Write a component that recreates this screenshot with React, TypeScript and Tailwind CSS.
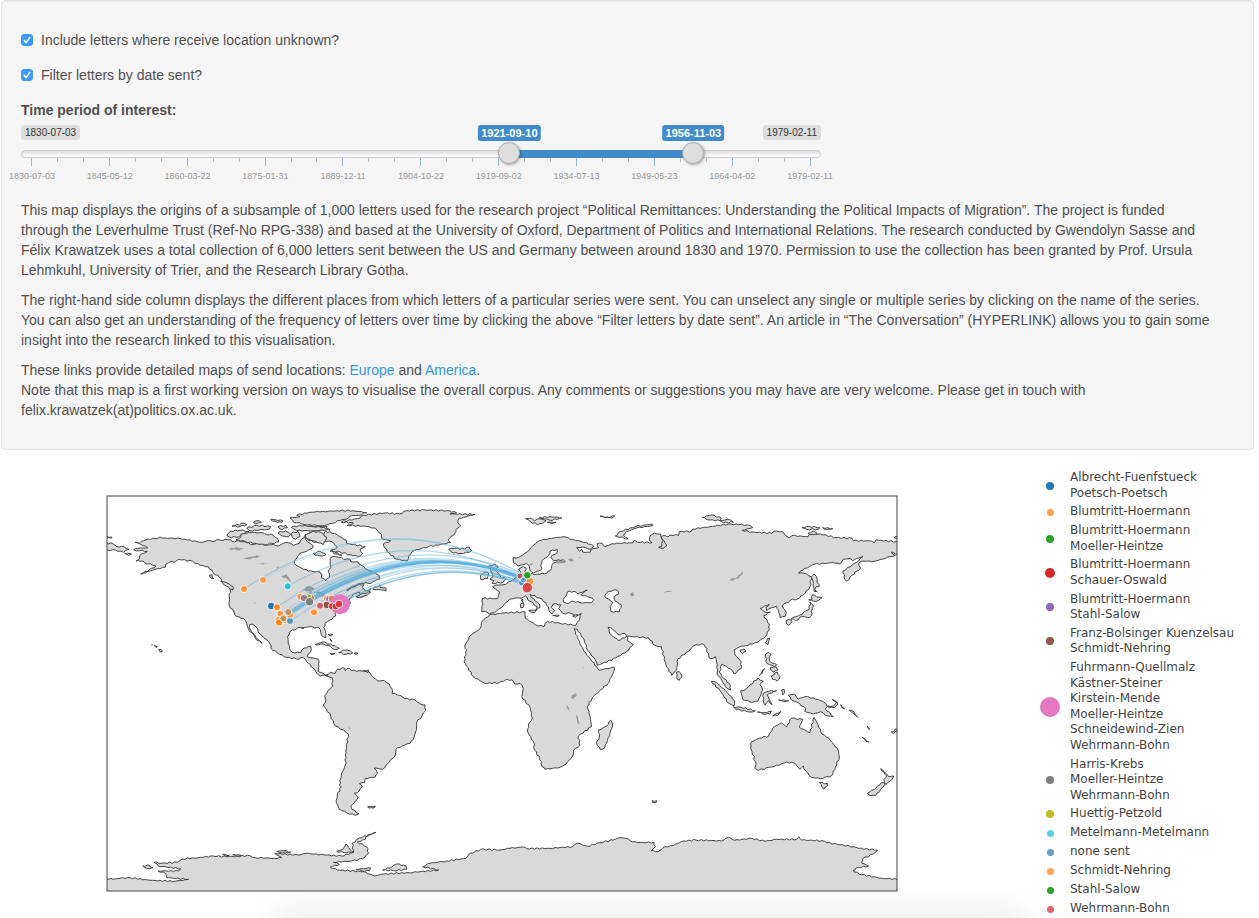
import { useState } from "react";

/* ---------- dates ---------- */

const DAY = 86400000;
const START = Date.UTC(1830, 6, 3);
const SPAN = Math.round((Date.UTC(1979, 1, 11) - START) / DAY);
const toDays = (y: number, m: number, d: number) =>
  Math.round((Date.UTC(y, m - 1, d) - START) / DAY);
const toLabel = (days: number) =>
  new Date(START + days * DAY).toISOString().slice(0, 10);

const TICK_LABELS = [
  "1830-07-03",
  "1845-05-12",
  "1860-03-22",
  "1875-01-31",
  "1889-12-11",
  "1904-10-22",
  "1919-09-02",
  "1934-07-13",
  "1949-05-23",
  "1964-04-02",
  "1979-02-11",
];

/* ---------- map geometry ---------- */

// Outlines are digitised sheet by sheet, three units to one map unit.
const SHEETS: Record<string, [number, number]> = {
  a: [100, 490],
  b: [300, 490],
  c: [450, 490],
  d: [670, 490],
  e: [300, 640],
  f: [450, 600],
  g: [670, 640],
  h: [100, 790],
  i: [500, 780],
};

// Long coast segments are subdivided and roughened by up to this many map units.
const ROUGHNESS = 0.7;

function outline(source: string): string {
  let sheet = SHEETS.a;
  const corners: [number, number][] = [];
  for (const token of source.trim().split(/\s+/)) {
    if (SHEETS[token]) {
      sheet = SHEETS[token];
    } else {
      const [x, y] = token.split(",").map(Number);
      corners.push([sheet[0] + x / 3, sheet[1] + y / 3]);
    }
  }
  const points: string[] = [];
  corners.forEach(([x1, y1], k) => {
    const [x2, y2] = corners[(k + 1) % corners.length];
    const length = Math.hypot(x2 - x1, y2 - y1);
    const pieces = Math.max(1, Math.round(length / 2.6));
    for (let n = 0; n < pieces; n++) {
      const t = n / pieces;
      const offset =
        n === 0 ? 0 : Math.sin(k * 12.9 + n * 78.2 + x1) * ROUGHNESS;
      const x = x1 + (x2 - x1) * t - ((y2 - y1) / length) * offset;
      const y = y1 + (y2 - y1) * t + ((x2 - x1) / length) * offset;
      points.push(`${x.toFixed(1)},${y.toFixed(1)}`);
    }
  });
  return points.join(" ");
}

const LAND = [
  // North America
  `a 105,157 118,160 124,154 145,147 165,146 180,141 196,144 240,146 262,150 305,157 320,153 345,153 352,148 362,151 375,148 392,150 396,154 418,153 440,158 452,164 470,160 500,165 520,163 535,168 550,160 565,158 580,166 598,160 604,148 614,142 622,155 638,166 640,172 620,184 600,190 590,204 583,214 588,226 604,234 625,243 660,246
   b 60,249 66,253 64,263 78,272 88,262 84,243 92,232 90,205 98,199 125,202 132,209 150,207 152,215 174,216 184,226 205,240 222,247 236,256 240,266 226,272 215,279 181,280 165,288 150,294 140,301 158,292 178,283 192,284 186,293 196,303 213,295 210,308 186,321 170,320 180,310 177,306 160,312 150,325 146,333 152,339 132,345 118,352 108,362 107,378 90,390 75,400 71,412 78,430 77,443 70,441 62,427 56,412 44,414 36,410 20,412 5,416
   a 612,414 600,412 570,425 563,440 565,462 572,482 584,489 602,488 612,474 632,470 634,478 622,500 656,508 657,530 655,545
   b 65,548 76,556 92,548 94,556 84,560 75,556 62,558 48,546 40,534
   a 625,520 610,503 590,507 560,502 532,489 513,475 510,462 498,448 480,432 468,411 456,402 449,404 452,420 464,434 472,447 486,460 470,450 462,436 448,424 440,400 430,385 410,380 402,366 388,347 388,320 391,300 386,290 370,279 358,262 340,248 325,230 300,226 278,214 236,208 226,216 214,214 198,222 196,232 165,238 122,252 148,240 168,228 150,221 138,222 128,213 108,213 118,207 120,196 142,184 118,182 101,180 106,175 143,173 122,163`,
  // South America
  `e 76,106 92,96 106,100 112,88 134,84 136,92 148,84 154,92 178,92 205,93 214,106 232,122 254,122 268,132 278,152 276,160 300,166 314,176 345,180 358,190 375,195 377,212 366,228 350,247 350,268 342,292 330,310 305,318 288,328 286,346 268,366 248,388 222,384 233,400 226,411 196,415 194,428 178,431 187,440 172,458 162,460 174,472 162,490 152,498 156,508 177,521 165,526 140,518 118,508 109,488 112,465 124,440 118,436 124,405 136,375 138,330 145,282 136,274 106,258 92,228 70,195 78,180 74,168 84,152 98,138 96,112`,
  // Eurasia and Africa
  `c 190,203 206,202 232,186 250,166 268,152 296,146 322,142 348,141 360,148 385,152 424,163 431,169 420,178 398,171 380,172 388,184 396,178 398,186 420,187 424,178 446,173 442,161 456,160 465,170 486,161 538,158 548,159 553,151 562,156 606,158 598,148 600,138 614,129 632,132 637,148 651,166 640,175 626,172 636,168 638,152 634,140 646,137 654,141 660,135
   d 26,136 28,125 64,124 68,117 120,110 175,102 206,104 240,106 248,113 216,121 246,126 305,130 312,124 338,125 348,138 358,143 366,137 414,140 418,133 452,132 498,143 546,145 550,152 604,153 613,158 618,150 678,155 690,158 690,198 664,186 676,196 660,200 640,207 612,214 575,213 566,220 572,234 562,243 546,256 530,274 522,262 520,242 546,226 566,212 579,200 560,205 548,212 540,205 520,208 510,222 490,218 432,223 398,240 386,250 402,250 424,260 420,290 405,310 382,327 362,330 350,338 336,348 349,368 346,379 330,383 326,368 320,348 304,353 290,362 288,352 298,343 270,355 284,366 301,366 281,377 298,402 298,420 285,440 262,457 226,467 214,468 192,480 194,492 214,516 213,536 192,552 182,537 156,522 148,546 162,566
   g 178,130 182,150 166,140 152,115
   d 142,555 142,525 136,500 120,506 106,470 95,461 70,468 60,480 24,506 20,538 6,556
   c 665,556 648,525 634,470 615,466 595,443 530,439 526,431 504,434 488,417 474,412 480,432 504,451 524,444 530,438 532,452 550,463 530,484 498,504 442,526 436,510 412,480 403,450 382,418 372,416 384,448 402,484 440,530 446,540 493,532
   f 490,218 474,250 430,290 411,320 421,350 424,380 385,408 390,436 371,450 368,468 348,492 330,502 285,508 276,500 274,484 254,450 250,425 233,396 235,375 247,354 240,322 215,290 220,265 210,250 194,252 186,239 166,240 148,248 104,250 70,230 42,185 50,150 44,138 62,106 90,86 96,64 118,45 160,39 225,36 226,55 256,74 282,80 292,64 330,70 378,76 390,52
   c 394,370 378,378 362,370 338,370 326,356 332,344 310,342 304,352 314,362 306,372 296,358 288,338 268,324 240,312 244,322 268,342 270,352 258,362 262,350 240,334 226,318 214,325 196,324 178,328 158,348 134,368 118,372 110,366 95,366 98,325 142,326 149,306 128,290 138,285 162,284 182,274 196,264 205,262 212,252 206,238 220,230 230,236 224,244 238,252 262,252 290,250 304,236 306,224 318,217 346,215 340,209 310,212 302,202 322,186 322,178 300,184 296,196 276,212 272,226 276,236 262,244 250,250 240,242 238,228 230,220 204,228 192,220`,
  // Antarctica
  `h 10,265 40,268 60,265 90,263 150,271 225,274 266,268 200,263 196,250 174,243 236,243 242,236 175,228 163,217 185,220 232,217 246,207 310,202 340,198 380,200 450,197 466,203 524,205 545,203 524,190 548,193 600,195 618,190 672,195 724,198 760,188 757,160 778,144 828,127 798,140 796,148 772,156 800,170 806,190 788,206 755,213 700,217 718,223 691,231 712,240 790,245 824,258 850,252 928,248 1016,240 968,230 990,220 1040,213 1098,205 1106,193 1142,178 1200,180
   i 30,205 68,201 80,206 150,205 218,200 232,190 262,199 300,188 340,180 358,173 378,175 392,183 412,188 462,187 466,200 454,212 474,215 494,200 520,197 545,184 588,180 665,183 685,172 704,181 755,175 795,184 830,178 890,178 897,170 905,180 965,182 980,188 1060,200 1076,205 1132,210 1120,222 1088,236 1084,248 1106,258 1068,264 1059,272 1085,284 1145,295 1200,298 1200,348
   h 10,318`,
  // Greenland and Iceland
  `b 124,96 180,84 190,76 255,69 298,72 320,62 376,60 440,62 470,68 450,72 525,73 490,82 478,84 474,98 482,108 468,118 464,130 444,150 452,158 385,170 342,182 326,197 322,213 290,208 262,186 250,162 272,152 248,148 244,132 224,114 190,108 142,106 160,99`,
  `b 446,178 462,175 480,178 508,172 515,182 490,191 460,189`,
  // Canadian Arctic
  `a 570,84 600,80 590,76 614,69 645,66 b 60,66 110,62 160,62 200,68 176,76 150,78 138,88 112,92 98,100 66,108 30,104 a 616,104 598,98 582,98`,
  `b 0,112 36,108 82,110 76,118 40,122 6,120`,
  `b 12,140 28,128 70,134 76,124 104,130 118,140 138,150 140,160 196,170 180,178 188,190 176,200 150,194 120,186 90,184 112,172 96,156 72,152 40,156 22,148`,
  `a 380,136 392,123 420,121 446,124 430,134 408,142 388,141`,
  `a 408,150 422,142 424,132 454,128 488,128 500,134 514,132 530,144 536,156 516,160 494,164 458,160 436,154`,
  `a 396,108 432,100 440,104 420,110`,
  `a 460,97 478,92 484,98 468,102`,
  `a 440,115 470,106 512,110 508,118 478,120 450,122`,
  `a 512,88 548,92 546,97 518,94`,
  `a 534,110 558,106 562,114 540,117`,
  `a 534,128 556,123 572,132 566,140 546,138`,
  `a 574,112 598,106 640,110 672,112 690,120 640,122 590,122`,
  `a 616,134 640,124 664,128 680,142 670,164 640,152 620,146`,
  `a 574,130 594,124 600,140 588,148 576,140`,
  `b 40,190 60,184 78,194 68,198 46,196`,
  `b 95,180 112,188 126,196 104,192`,
  // Atlantic coast islands
  `b 218,297 240,284 240,292 258,294 258,303 244,300`,
  `b 168,320 190,310 211,306 202,315 178,323`,
  // Pacific coast islands and Aleutians
  `a 362,274 380,278 400,292 398,300 378,288`,
  `a 328,256 336,254 341,266 332,264`,
  `a 10,158 40,162 50,170 72,170 87,178 70,187 46,180 10,182`,
  `a 10,139 36,141 34,145 10,144`,
  `a 74,190 94,192 86,196`,
  `a 176,478 187,482 182,487`,
  `a 163,467 172,470 168,472`,
  // Caribbean
  `b 46,464 66,456 92,462 118,475 104,479 84,466 62,462`,
  `b 116,488 128,480 142,480 158,489 138,493`,
  `b 90,490 104,491 96,494`,
  `b 162,490 174,490 168,493`,
  `b 84,434 98,434 94,438`,
  `b 90,446 96,454 92,452`,
  `b 190,542 206,540 204,548`,
  // Falklands and Kerguelen
  `e 203,500 226,498 222,504 206,504`,
  `i 456,62 470,62 468,68 458,68`,
  // British Isles
  `c 116,228 134,222 145,231 136,238 150,258 168,268 160,277 126,280 132,272 120,268 130,260 122,240`,
  `c 92,268 92,256 104,246 117,252 112,266`,
  // Mediterranean islands
  `c 236,362 258,360 254,368`,
  `c 211,342 220,338 220,352 212,354`,
  `c 214,330 219,328 218,337`,
  `c 308,376 328,377 320,380`,
  `c 368,378 384,374 376,382`,
  // Arctic Ocean islands
  `c 226,86 244,84 254,92 270,86 288,92 278,100 262,104 240,94`,
  `c 268,83 300,80 336,83 322,88 298,90`,
  `c 292,97 318,97 304,101`,
  `c 450,79 472,82 494,78 486,84`,
  `c 496,138 512,124 556,110 606,102 608,107 560,114 530,124 520,136 534,146 508,142`,
  `d 96,82 124,75 154,84 150,92 120,90`,
  `d 150,92 178,88 190,97 160,98`,
  `d 396,113 416,109 450,113 444,118 410,118`,
  `d 458,113 488,116 466,119`,
  `d 414,130 430,124 442,130 426,134`,
  `d 672,143 690,138 690,146`,
  // Japan and Sakhalin
  `d 424,262 432,252 440,260 442,278 448,290 438,290 434,300 442,305 432,304 430,280`,
  `d 416,330 426,328 428,314 440,321 456,323 444,332 430,334`,
  `d 420,336 430,346 424,364 424,378 412,383 394,380 384,390 362,388 376,380 396,374 404,364 418,358`,
  `d 348,392 360,388 366,394 356,406 350,402`,
  // South-east Asia
  `d 286,458 292,446 299,445 294,464`,
  `d 210,480 222,476 228,484 218,491`,
  `d 19,546 28,545 36,560 28,571 20,562`,
  `g 287,42 296,37 302,43 298,62 308,70 320,74 314,80 290,70`,
  `g 300,84 318,80 323,90 312,96 304,92`,
  `g 304,108 322,96 330,110 322,123 308,118`,
  `g 268,106 284,86 276,100`,
  `g 124,124 140,128 166,152 194,182 192,198 176,190 150,152`,
  `g 190,200 212,202 256,212 240,216 198,208`,
  `g 212,152 224,150 264,114 280,124 270,134 278,150 264,184 240,186 218,178`,
  `g 280,160 296,154 320,152 304,160 292,164 296,174 306,194 296,182 286,196 280,182`,
  `g 334,150 342,148 344,158 338,165`,
  `g 326,180 356,182 340,185`,
  `g 262,216 282,218 304,214 300,222 280,222`,
  `g 308,228 332,214 322,226`,
  `g 355,166 374,163 384,178 404,170 430,174 460,185 472,200 466,206 490,230 466,226 452,215 430,222 404,214 408,206 380,186 364,180`,
  `g 472,198 490,198 500,186 504,192 492,203 478,203`,
  `g 486,178 502,188 494,184`,
  `g 512,194 524,206 516,203`,
  `g 538,210 552,216 563,232 552,222`,
  // Australia and New Zealand
  `g 244,306 268,294 296,288 308,264 334,248 350,260 364,235 398,238 388,262 420,278 432,232 444,254 456,282 476,294 504,330 508,350 500,375 484,408 464,412 452,416 424,412 408,394 400,378 390,388 374,370 350,366 312,380 298,382 266,391 254,384 258,374 246,334 243,318`,
  `g 448,428 472,430 472,438 462,447`,
  `g 632,386 648,400 656,410 671,408 660,424 648,434 642,418 650,408`,
  `g 592,460 618,444 634,428 646,432 618,466 600,467`,
  `g 576,292 596,306 588,304`,
  `g 592,258 599,268 596,268`,
  `g 664,276 690,262 690,268 670,281`,
  // Madagascar
  `f 482,360 488,378 480,400 464,444 450,448 440,430 448,412 446,390 470,378`,
  // Antarctic islands
  `h 710,184 728,178 738,162 750,178 760,186 740,188`,
  `h 848,240 876,230 890,222 918,228 920,238 880,242`,
  `h 768,238 812,234 808,242 786,243`,
  `h 128,228 148,226 158,233 140,235`,
  `h 368,193 388,196 376,198`,
  `h 398,194 424,196 410,199`,
  `h 530,184 552,182 572,186 548,189`,
].map(outline);

const INLAND_SEAS = [
  `c 344,322 352,306 372,304 384,312 412,300 392,314 420,322 431,330 424,338 390,338 370,334 350,340 340,336`,
  `c 464,318 476,304 500,300 506,312 492,320 496,334 514,344 508,366 482,364 480,350 488,338 474,326`,
].map(outline);

const LAKES = [
  `a 386,177 410,171 432,177 410,181`,
  `a 428,205 452,200 470,195 488,200 462,203 450,208 436,207`,
  `a 474,221 504,220 488,224`,
  `a 528,233 538,228 534,236`,
  `a 544,258 560,252 574,276 562,268`,
  `a 462,337 468,340 464,341`,
  `b 4,300 28,288 44,297 26,304`,
  `b 22,322 28,304 36,304 32,328`,
  `b 40,304 74,308 78,320 60,320 58,314`,
  `b 60,328 84,322 78,328`,
  `b 84,320 98,316 94,321`,
  `c 308,216 324,210 348,215 330,220`,
  `c 354,208 364,205 372,212 360,214`,
  `c 382,203 390,202 396,208`,
  `c 540,312 550,306 552,317 544,319`,
  `c 640,308 650,303 676,304 650,306`,
  `c 238,224 250,219 244,226`,
  `c 398,532 404,532 401,534`,
  `d 180,268 202,262 216,244 219,248 206,266 182,272`,
  `f 366,286 378,279 380,288 370,298 364,294`,
  `f 348,306 352,318 362,338 352,326`,
  `f 378,343 384,352 388,374 382,368`,
  `e 144,260 153,266 150,269`,
].map(outline);

// Longer journeys bow further north.
function route(x1: number, y1: number, x2: number, y2: number): string {
  const span = x2 - x1;
  const rise = 0.0005 * span * span + 4;
  const cx = (x1 + x2) / 2;
  const cy = (y1 + y2) / 2 - 2 * rise;
  return `M${x1} ${y1}Q${cx} ${cy} ${x2} ${y2}`;
}

// x, y, destination x, destination y, opacity, width
const ROUTES: [number, number, number, number, number, number][] = [
  [244, 589, 529, 578, 0.4, 1.3],
  [263, 580, 528, 577, 0.25, 1],
  [288, 586, 526, 580, 0.5, 1.3],
  [277, 607, 528, 577, 0.45, 1.3],
  [280, 614, 528, 582, 0.3, 1.3],
  [288, 612, 528, 580, 0.5, 1.8],
  [278, 620, 528, 580, 0.4, 1.6],
  [279, 622, 527, 579, 0.4, 1.4],
  [282, 619, 526, 580, 0.5, 1.6],
  [284, 617, 528, 580, 0.5, 1.8],
  [287, 617, 528, 578, 0.5, 1.6],
  [290, 621, 528, 584, 0.35, 1.2],
  [301, 597, 528, 581, 0.4, 1.8],
  [304, 598, 528, 582, 0.5, 1.8],
  [309, 599, 527, 580, 0.4, 1.4],
  [310, 602, 525, 584, 0.45, 1.4],
  [320, 606, 528, 584, 0.35, 1.2],
  [327, 599, 528, 582, 0.35, 1.4],
  [332, 605, 524, 584, 0.5, 1.4],
  [339, 604, 528, 586, 0.7, 1.4],
];

const PLACES: [number, number, number, string, number][] = [
  [244, 589, 3.6, "#ff7f0e", 0.75],
  [263, 580, 3.5, "#ff7f0e", 0.7],
  [287.7, 586.3, 3.5, "#17becf", 0.9],
  [271.3, 606, 3.8, "#1f77b4", 1],
  [277, 607.3, 3.5, "#ff7f0e", 0.9],
  [280.3, 613.7, 3.5, "#ff7f0e", 0.7],
  [290, 615, 3.5, "#ff7f0e", 0.8],
  [288.3, 612, 3.5, "#c08a52", 0.9],
  [278.3, 620, 3.5, "#ff7f0e", 0.8],
  [284.5, 620, 3.5, "#ff7f0e", 0.8],
  [279, 622.5, 3.6, "#ff7f0e", 0.9],
  [283.3, 618.3, 3.5, "#c08a52", 0.8],
  [290, 621, 3.5, "#1f77b4", 0.7],
  [300.3, 596.7, 3.5, "#ff7f0e", 0.7],
  [311, 598, 3.4, "#d62728", 0.8],
  [308.3, 597.5, 3.7, "#8fb43a", 0.95],
  [304, 598, 3.7, "#8c6878", 0.8],
  [309.5, 601.7, 4.2, "#7f7f7f", 1],
  [314, 612.3, 3.5, "#ff7f0e", 0.8],
  [327, 598.5, 3.5, "#ff7f0e", 0.7],
  [329, 599, 3.5, "#9467bd", 0.8],
  [332, 598.8, 3.7, "#d9844a", 0.95],
  [340, 604.3, 10, "#e377c2", 1],
  [326.7, 605, 3.8, "#8c564b", 1],
  [320, 605.7, 3.5, "#d62728", 0.7],
  [332, 606.3, 3.6, "#d62728", 0.9],
  [335.7, 606.3, 3.6, "#d62728", 0.9],
  [339, 604, 3.8, "#d62728", 0.85],
  [520, 576, 3, "#d62728", 0.7],
  [521.5, 583, 3, "#1f77b4", 0.7],
  [529, 581.5, 4.7, "#ff7f0e", 0.75],
  [523.5, 580, 3, "#1f77b4", 0.5],
  [527.3, 575.2, 3.8, "#2ca02c", 1],
  [527.3, 587.7, 5.2, "#d62728", 0.8],
];

function WorldMap() {
  return (
    <svg
      viewBox="0 450 1030 468"
      className="block h-auto w-full"
      role="img"
      aria-label="Send locations of letters"
    >
      <clipPath id="frame">
        <rect x="107" y="496" width="790" height="395" />
      </clipPath>
      <g clipPath="url(#frame)">
        <g fill="#d9d9d9" stroke="#444" strokeLinejoin="round">
          {LAND.map((points, k) => (
            <polygon key={k} points={points} />
          ))}
        </g>
        <g fill="#fff" stroke="#444" strokeLinejoin="round">
          {INLAND_SEAS.map((points, k) => (
            <polygon key={k} points={points} />
          ))}
        </g>
        <g fill="#999">
          {LAKES.map((points, k) => (
            <polygon key={k} points={points} />
          ))}
        </g>
        <polyline points="151.3,644.8 152.6,645.2" stroke="#444" />
        <g fill="none" stroke="#5dafdb">
          {ROUTES.map(([x1, y1, x2, y2, opacity, width], k) => (
            <path
              key={k}
              d={route(x1, y1, x2, y2)}
              strokeOpacity={opacity}
              strokeWidth={width}
            />
          ))}
        </g>
        <g stroke="#fff" strokeWidth="1">
          {PLACES.map(([cx, cy, r, fill, opacity], k) => (
            <circle
              key={k}
              cx={cx}
              cy={cy}
              r={r}
              fill={fill}
              fillOpacity={opacity}
              strokeOpacity={r > 9 ? 0 : 0.8}
            />
          ))}
        </g>
      </g>
      <rect
        x="107"
        y="496"
        width="790"
        height="395"
        fill="none"
        stroke="#444"
      />
    </svg>
  );
}

/* ---------- legend ---------- */

const LEGEND: { dot: string; names: string[] }[] = [
  { dot: "size-[8px] bg-[#1f77b4]", names: ["Albrecht-Fuenfstueck", "Poetsch-Poetsch"] },
  { dot: "size-[7px] bg-[#ff9f4a]", names: ["Blumtritt-Hoermann"] },
  { dot: "size-[8px] bg-[#2ca02c]", names: ["Blumtritt-Hoermann", "Moeller-Heintze"] },
  { dot: "size-[10px] bg-[#d62728]", names: ["Blumtritt-Hoermann", "Schauer-Oswald"] },
  { dot: "size-[8px] bg-[#9467bd]", names: ["Blumtritt-Hoermann", "Stahl-Salow"] },
  { dot: "size-[8px] bg-[#8c564b]", names: ["Franz-Bolsinger Kuenzelsau", "Schmidt-Nehring"] },
  {
    dot: "size-[20px] bg-[#e377c2]",
    names: [
      "Fuhrmann-Quellmalz",
      "Kästner-Steiner",
      "Kirstein-Mende",
      "Moeller-Heintze",
      "Schneidewind-Zien",
      "Wehrmann-Bohn",
    ],
  },
  { dot: "size-[8px] bg-[#7f7f7f]", names: ["Harris-Krebs", "Moeller-Heintze", "Wehrmann-Bohn"] },
  { dot: "size-[8px] bg-[#bcbd22]", names: ["Huettig-Petzold"] },
  { dot: "size-[7px] bg-[#5bd1dd]", names: ["Metelmann-Metelmann"] },
  { dot: "size-[7px] bg-[#629fca]", names: ["none sent"] },
  { dot: "size-[7px] bg-[#ffa552]", names: ["Schmidt-Nehring"] },
  { dot: "size-[7px] bg-[#2ca02c]", names: ["Stahl-Salow"] },
  { dot: "size-[7px] bg-[#e26768]", names: ["Wehrmann-Bohn"] },
];

function Legend() {
  return (
    <ul className="flex flex-col gap-[3px] pt-5 font-['DejaVu_Sans',Verdana,sans-serif] text-xs leading-[1.3] text-[#444]">
      {LEGEND.map((item, k) => (
        <li key={k} className="flex min-h-4 items-center">
          <span className="flex w-10 shrink-0 justify-center">
            <span className={`rounded-full ${item.dot}`} />
          </span>
          <span className="whitespace-nowrap">
            {item.names.map((name) => (
              <span key={name} className="block">
                {name}
              </span>
            ))}
          </span>
        </li>
      ))}
    </ul>
  );
}

/* ---------- controls ---------- */

function Checkbox({ id, label }: { id: string; label: string }) {
  const [checked, setChecked] = useState(true);
  return (
    <div className="flex h-5 items-center gap-2">
      <span className="grid size-3 place-items-center">
        <input
          id={id}
          type="checkbox"
          checked={checked}
          onChange={(e) => setChecked(e.target.checked)}
          className="col-start-1 row-start-1 size-3 appearance-none rounded-[3px] border border-[#b5b5b5] bg-white checked:border-[#3b99fc] checked:bg-[#3b99fc]"
        />
        {checked && (
          <svg
            viewBox="0 0 12 12"
            className="pointer-events-none col-start-1 row-start-1 size-3"
            fill="none"
            stroke="#fff"
            strokeWidth="1.6"
            strokeLinecap="round"
            strokeLinejoin="round"
          >
            <path d="M3.2 6.4 5.2 8.6 8.8 3.4" />
          </svg>
        )}
      </span>
      <label htmlFor={id}>{label}</label>
    </div>
  );
}

const RANGE_CLASS =
  "pointer-events-none absolute inset-x-0 top-[17px] h-[22px] w-full appearance-none bg-transparent [&::-webkit-slider-thumb]:pointer-events-auto [&::-webkit-slider-thumb]:size-[22px] [&::-webkit-slider-thumb]:appearance-none [&::-webkit-slider-thumb]:rounded-full [&::-webkit-slider-thumb]:border [&::-webkit-slider-thumb]:border-[#aaa] [&::-webkit-slider-thumb]:bg-[#ddd] [&::-webkit-slider-thumb]:shadow-[1px_1px_3px_rgba(0,0,0,0.3)]";

function DateRange() {
  const [from, setFrom] = useState(toDays(1921, 9, 10));
  const [to, setTo] = useState(toDays(1956, 11, 3));
  const at = (days: number) => `${(days / SPAN) * 100}%`;

  return (
    <div className="relative max-w-[800px]">
      <div className="flex h-[15px] justify-between text-[10px] leading-[15px] text-[#333]">
        <span className="rounded-[3px] bg-[#ddd] px-1">{toLabel(0)}</span>
        <span className="rounded-[3px] bg-[#ddd] px-1">{toLabel(SPAN)}</span>
      </div>
      <div className="mt-[10px] h-2 rounded-full border border-[#ccc] bg-linear-to-b from-[#dedede] to-white" />

      <div className="absolute inset-x-[11px] top-0">
        <div
          className="absolute top-[25px] h-2 bg-[#428bca]"
          style={{ left: at(from), right: `${100 - (to / SPAN) * 100}%` }}
        />
        {[from, to].map((value, k) => (
          <span
            key={k}
            className="absolute top-0 -translate-x-1/2 rounded-[3px] bg-[#428bca] px-[3px] text-[11px] leading-4 font-bold whitespace-nowrap text-white"
            style={{ left: at(value) }}
          >
            {toLabel(value)}
          </span>
        ))}
      </div>

      <div className="flex justify-between px-[10px]">
        {Array.from({ length: 31 }, (_, k) => (
          <span
            key={k}
            className={
              k % 3 === 0 ? "h-2 w-px bg-[#99badd]" : "h-1 w-px bg-[#bbb]"
            }
          />
        ))}
      </div>
      <div className="-mr-[14px] -ml-[14px] flex justify-between pt-1 text-[9px] leading-3 text-[#999]">
        {TICK_LABELS.map((label) => (
          <span key={label} className="w-[50px] text-center whitespace-nowrap">
            {label}
          </span>
        ))}
      </div>

      <input
        type="range"
        id="period"
        min={0}
        max={SPAN}
        value={from}
        onChange={(e) => setFrom(Math.min(Number(e.target.value), to))}
        className={RANGE_CLASS}
      />
      <input
        type="range"
        aria-label="End of time period"
        min={0}
        max={SPAN}
        value={to}
        onChange={(e) => setTo(Math.max(Number(e.target.value), from))}
        className={RANGE_CLASS}
      />
    </div>
  );
}

/* ---------- page ---------- */

export default function App() {
  return (
    <main className="relative min-h-screen overflow-hidden bg-white font-['Liberation_Sans',Arial,sans-serif] text-sm leading-5 text-[#505050]">
      <section className="mr-[5px] ml-px rounded-sm border border-[#e3e3e3] bg-[#f5f5f5] px-[19px] pt-[29px] pb-[29px] shadow-[inset_0_1px_1px_rgba(0,0,0,0.05)]">
        <div className="flex flex-col gap-[15px]">
          <Checkbox
            id="unknown"
            label="Include letters where receive location unknown?"
          />
          <Checkbox id="filter" label="Filter letters by date sent?" />
          <div>
            <label htmlFor="period" className="mb-[5px] block font-bold">
              Time period of interest:
            </label>
            <DateRange />
          </div>
        </div>

        <div className="mt-[18px] flex flex-col gap-[10px] pr-5">
          <p>
            This map displays the origins of a subsample of 1,000 letters used
            for the research project “Political Remittances: Understanding the
            Political Impacts of Migration”. The project is funded through the
            Leverhulme Trust (Ref-No RPG-338) and based at the University of
            Oxford, Department of Politics and International Relations. The
            research conducted by Gwendolyn Sasse and Félix Krawatzek uses a
            total collection of 6,000 letters sent between the US and Germany
            between around 1830 and 1970. Permission to use the collection has
            been granted by Prof. Ursula Lehmkuhl, University of Trier, and the
            Research Library Gotha.
          </p>
          <p>
            The right-hand side column displays the different places from which
            letters of a particular series were sent. You can unselect any
            single or multiple series by clicking on the name of the series.
            You can also get an understanding of the frequency of letters over
            time by clicking the above “Filter letters by date sent”. An article
            in “The Conversation” (HYPERLINK) allows you to gain some insight
            into the research linked to this visualisation.
          </p>
          <p>
            These links provide detailed maps of send locations:{" "}
            <a href="#europe" className="text-[#3498db]">
              Europe
            </a>{" "}
            and{" "}
            <a href="#america" className="text-[#3498db]">
              America
            </a>
            .<br />
            Note that this map is a first working version on ways to visualise
            the overall corpus. Any comments or suggestions you may have are
            very welcome. Please get in touch with
            felix.krawatzek(at)politics.ox.ac.uk.
          </p>
        </div>
      </section>

      <section className="grid grid-cols-[minmax(0,1fr)_229px]">
        <WorldMap />
        <Legend />
      </section>

      <div className="pointer-events-none absolute right-[240px] -bottom-[10px] left-[280px] h-2 shadow-[0_0_32px_4px_rgba(0,0,0,0.14)]" />
    </main>
  );
}
